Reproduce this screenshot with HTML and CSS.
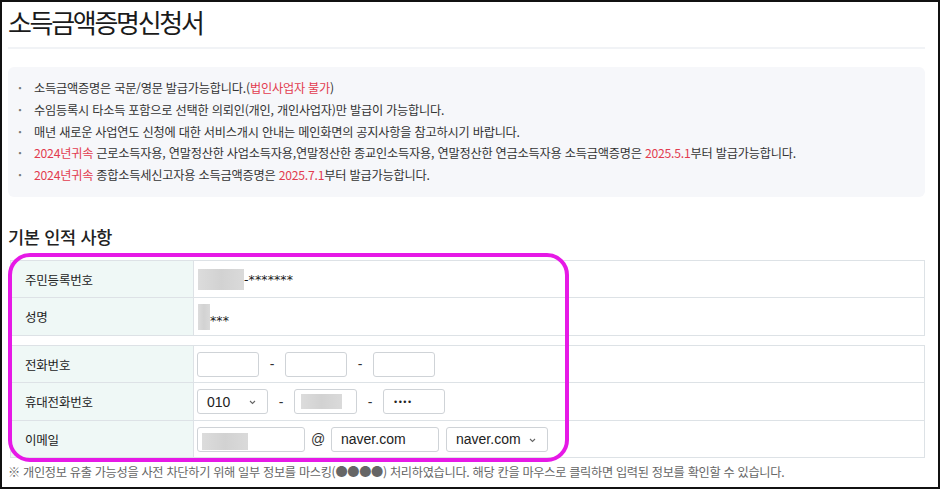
FILE: index.html
```html
<!DOCTYPE html>
<html lang="ko">
<head>
<meta charset="utf-8">
<link rel="stylesheet" href="styles.css">
</head>
<body>
<div class="frame">
  <h1 class="title">소득금액증명신청서</h1>
  <div class="sep"></div>
  <ul class="info">
    <li>소득금액증명은 국문/영문 발급가능합니다.(<span class="red">법인사업자 불가</span>)</li>
    <li>수임등록시 타소득 포함으로 선택한 의뢰인(개인, 개인사업자)만 발급이 가능합니다.</li>
    <li>매년 새로운 사업연도 신청에 대한 서비스개시 안내는 메인화면의 공지사항을 참고하시기 바랍니다.</li>
    <li><span class="red">2024년귀속</span> 근로소득자용, 연말정산한 사업소득자용,연말정산한 종교인소득자용, 연말정산한 연금소득자용 소득금액증명은 <span class="red">2025.5.1</span>부터 발급가능합니다.</li>
    <li><span class="red">2024년귀속</span> 종합소득세신고자용 소득금액증명은 <span class="red">2025.7.1</span>부터 발급가능합니다.</li>
  </ul>
  <h2 class="sub">기본 인적 사항</h2>
  <div class="tbl t1">
    <div class="row">
      <div class="lbl">주민등록번호</div>
      <div class="val"><span class="mask m-rrn"></span><span class="star">-*******</span></div>
    </div>
    <div class="row">
      <div class="lbl">성명</div>
      <div class="val"><span class="mask m-name"></span><span class="star low">***</span></div>
    </div>
  </div>
  <div class="tbl t2">
    <div class="row">
      <div class="lbl">전화번호</div>
      <div class="val">
        <span class="inp w62"></span><span class="dash">-</span>
        <span class="inp w62"></span><span class="dash">-</span>
        <span class="inp w62"></span>
      </div>
    </div>
    <div class="row">
      <div class="lbl">휴대전화번호</div>
      <div class="val">
        <span class="inp sel w71"><span class="txt">010</span><svg class="chev" width="7" height="5" viewBox="0 0 7 5"><path d="M1 1l2.5 2.5L6 1" fill="none" stroke="#666" stroke-width="1.1"/></svg></span><span class="dash">-</span>
        <span class="inp w63"><span class="mask m-mid"></span></span><span class="dash">-</span>
        <span class="inp w62"><span class="dots">••••</span></span>
      </div>
    </div>
    <div class="row">
      <div class="lbl">이메일</div>
      <div class="val email">
        <span class="inp w108"><span class="mask m-mail"></span></span><span class="at">@</span>
        <span class="inp w108"><span class="txt">naver.com</span></span>
        <span class="inp sel w102"><span class="txt">naver.com</span><svg class="chev" width="7" height="5" viewBox="0 0 7 5"><path d="M1 1l2.5 2.5L6 1" fill="none" stroke="#666" stroke-width="1.1"/></svg></span>
      </div>
    </div>
  </div>
  <p class="note">※ 개인정보 유출 가능성을 사전 차단하기 위해 일부 정보를 마스킹(●●●●) 처리하였습니다. 해당 칸을 마우스로 클릭하면 입력된 정보를 확인할 수 있습니다.</p>
  <div class="highlight"></div>
</div>
</body>
</html>
```

FILE: styles.css
```css
* { box-sizing: border-box; }
html, body { margin: 0; padding: 0; background: #fff; }
body { font-family: "Noto Sans CJK KR", "Noto Sans", "Liberation Sans", sans-serif; color: #222; }

.frame {
  position: relative;
  width: 940px;
  height: 489px;
  border: 2px solid #111;
  padding: 0 13px 0 6px;
  overflow: hidden;
}

.title {
  margin: 0;
  height: 44px;
  line-height: 40px;
  font-size: 26px;
  font-weight: 400;
  letter-spacing: -2.3px;
  color: #1a1a1a;
}
.sep { height: 2px; background: #f1f3f6; margin-top: 1px; }

.info {
  list-style: none;
  margin: 18px 0 0;
  padding: 11px 0 10px 10px;
  background: #f6f7fa;
  border-radius: 6px;
  font-size: 12.2px;
  line-height: 21.8px;
  color: #333;
  letter-spacing: -0.22px;
}
.info li::before {
  content: "·";
  display: inline-block;
  width: 16px;
  color: #777;
  font-weight: 700;
}
.red { color: #e23c4f; }

.sub {
  margin: 28px 0 0;
  font-size: 17.5px;
  font-weight: 500;
  line-height: 24px;
  letter-spacing: -0.3px;
  color: #222;
}

.tbl {
  margin-left: 2px;
  border: 1px solid #dde2e6;
  border-bottom: none;
}
.t1 { margin-top: 11px; }
.t2 { margin-top: 9px; }
.row {
  display: grid;
  grid-template-columns: 183px 1fr;
  height: 37.5px;
  border-bottom: 1px solid #dde2e6;
}
.lbl {
  background: #eff8f6;
  border-right: 1px solid #dde2e6;
  padding-left: 14px;
  display: flex;
  align-items: center;
  font-size: 12.5px;
  color: #222;
  letter-spacing: -0.2px;
}
.val {
  display: flex;
  align-items: center;
  padding-left: 3px;
  font-size: 13px;
}

.mask {
  display: inline-block;
  background: linear-gradient(90deg, #dcdcdc, #d2d2d2 50%, #dadada);
  filter: blur(0.6px);
}
.m-rrn { width: 46px; height: 21px; margin-left: 1px; }
.m-name { width: 12px; height: 26px; margin-left: 1px; }
.m-mid { width: 41px; height: 15px; margin-left: 6px; }
.m-mail { width: 46px; height: 17px; margin-left: 4px; margin-top: 4px; }
.star { font-family: "DejaVu Sans", sans-serif; font-size: 12.5px; letter-spacing: 0.1px; color: #1a1a1a; }
.low { align-self: flex-end; margin-bottom: 7px; }

.inp {
  display: inline-flex;
  align-items: center;
  height: 25px;
  border: 1px solid #cfd3d7;
  border-radius: 3px;
  background: #fff;
  font-family: "Liberation Sans", Arial, sans-serif;
  font-size: 14px;
  color: #222;
  position: relative;
}
.w62 { width: 62px; }
.w63 { width: 63px; }
.w71 { width: 71px; }
.w108 { width: 108px; }
.w102 { width: 102px; }
.txt { padding-left: 9px; }
.sel .chev { position: absolute; right: 11px; top: 10px; }
.dots { padding-left: 10px; font-size: 9px; letter-spacing: 1.5px; }
.dash {
  width: 26px;
  text-align: center;
  font-family: "Liberation Sans", Arial, sans-serif;
  font-size: 14px;
  color: #333;
}
.at {
  width: 26px;
  text-align: center;
  font-family: "Liberation Sans", Arial, sans-serif;
  font-size: 14px;
  color: #333;
}
.email .inp + .at + .inp { margin-right: 7px; }

.note {
  margin: 6px 0 0 0;
  font-size: 12.2px;
  color: #666;
  letter-spacing: -0.3px;
  line-height: 16px;
}

.highlight {
  position: absolute;
  left: 6px;
  top: 251px;
  width: 561px;
  height: 209px;
  border: 4px solid #e619e6;
  border-radius: 22px;
  pointer-events: none;
}
```
